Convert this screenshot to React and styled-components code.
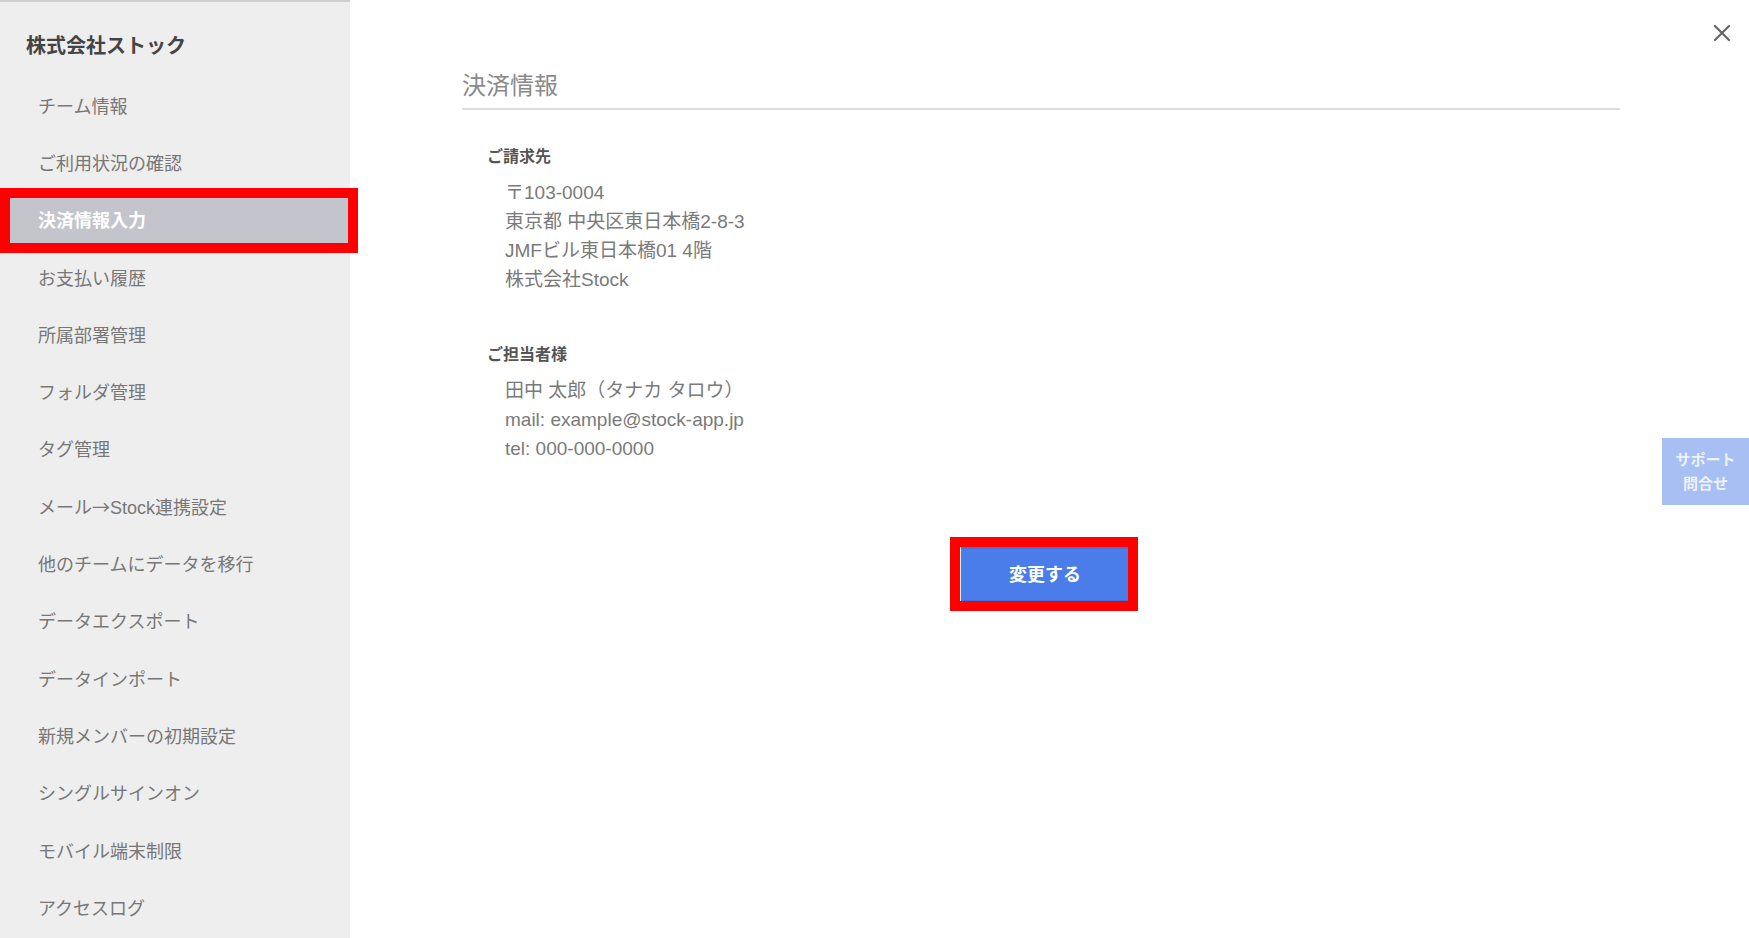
import React from "react";
import styled, { createGlobalStyle } from "styled-components";

const Global = createGlobalStyle`
  html, body { margin: 0; padding: 0; background: #fff; }
  body { font-family: "Liberation Sans", "Noto Sans CJK JP", sans-serif; }
  * { box-sizing: border-box; }
`;

const Page = styled.div`
  display: flex;
  width: 100%;
  height: 938px;
  overflow: hidden;
`;

const Sidebar = styled.aside`
  width: 350px;
  flex: none;
  background: #eeeeee;
  border-top: 2px solid #cfcfcf;
  position: relative;
  z-index: 2;
`;

const TeamName = styled.div`
  margin: 29px 0 15px 26px;
  line-height: 30px;
  font-size: 20px;
  font-weight: 700;
  color: #444;
`;

const Menu = styled.ul`
  list-style: none;
  margin: 0;
  padding: 0;
`;

const MenuItem = styled.li`
  position: relative;
  height: 57.3px;
  display: flex;
  align-items: center;
  padding-left: 38px;
  font-size: 18px;
  color: ${(p) => (p.$active ? "#fff" : "#777")};
  font-weight: ${(p) => (p.$active ? 700 : 400)};
  background: ${(p) => (p.$active ? "#c3c4cc" : "transparent")};
`;

const Arrow = styled.span`
  font-family: "Noto Sans CJK JP", sans-serif;
`;

const MarkBox = styled.span`
  position: absolute;
  pointer-events: none;
  border: 10px solid #ff0000;
  top: ${(p) => p.$t}px;
  left: ${(p) => p.$l}px;
  right: ${(p) => p.$r}px;
  bottom: ${(p) => p.$b}px;
`;

const Main = styled.main`
  flex: 1;
  position: relative;
`;

const Content = styled.div`
  margin-left: 112px;
  width: 1158px;
`;

const Heading = styled.h1`
  margin: 0;
  padding: 70px 0 6px;
  line-height: 32px;
  font-size: 24px;
  font-weight: 400;
  color: #8a8a8a;
  border-bottom: 2px solid #dcdcdc;
`;

const Section = styled.section`
  padding-left: 25px;
  margin-top: ${(p) => p.$top}px;
`;

const Label = styled.div`
  font-size: 16px;
  line-height: 24px;
  font-weight: 700;
  color: #555;
`;

const Lines = styled.div`
  margin-top: 9px;
  padding-left: 18px;
  font-size: 19px;
  line-height: 29px;
  color: #7a7a7a;
`;

const ButtonRow = styled.div`
  display: flex;
  justify-content: center;
  margin-top: 84px;
  padding-left: 8px;
`;

const Button = styled.button`
  position: relative;
  width: 168px;
  height: 55px;
  border: none;
  border-top: 2px solid #3f72e6;
  border-bottom: 2px solid #3f72e6;
  background: #4a7de9;
  color: #fff;
  font-family: inherit;
  font-size: 18px;
  font-weight: 700;
  padding: 0 0 3px;
  cursor: pointer;
`;

const Close = styled.button`
  position: absolute;
  top: 22px;
  right: 16px;
  width: 22px;
  height: 22px;
  padding: 0;
  border: none;
  background: transparent;
  display: flex;
  align-items: center;
  justify-content: center;
`;

const SupportTab = styled.div`
  position: absolute;
  right: 0;
  top: 438px;
  width: 87px;
  height: 67px;
  background: #a8bff3;
  color: #eef2fd;
  font-size: 15px;
  font-weight: 700;
  line-height: 24px;
  display: flex;
  flex-direction: column;
  align-items: center;
  justify-content: center;
`;

const menu = [
  "チーム情報",
  "ご利用状況の確認",
  "決済情報入力",
  "お支払い履歴",
  "所属部署管理",
  "フォルダ管理",
  "タグ管理",
  "ARROW",
  "他のチームにデータを移行",
  "データエクスポート",
  "データインポート",
  "新規メンバーの初期設定",
  "シングルサインオン",
  "モバイル端末制限",
  "アクセスログ",
];

export default function App() {
  return (
    <>
      <Global />
      <Page>
        <Sidebar>
          <TeamName>株式会社ストック</TeamName>
          <Menu>
            {menu.map((m, i) => (
              <MenuItem key={m} $active={i === 2}>
                {m === "ARROW" ? (
                  <>
                    メール<Arrow>→</Arrow>Stock連携設定
                  </>
                ) : (
                  m
                )}
                {i === 2 && <MarkBox $t={-3} $l={0} $r={-8} $b={-5} />}
              </MenuItem>
            ))}
          </Menu>
        </Sidebar>
        <Main>
          <Content>
            <Heading>決済情報</Heading>
            <Section $top={35}>
              <Label>ご請求先</Label>
              <Lines>
                <div>〒103-0004</div>
                <div>東京都 中央区東日本橋2-8-3</div>
                <div>JMFビル東日本橋01 4階</div>
                <div>株式会社Stock</div>
              </Lines>
            </Section>
            <Section $top={49}>
              <Label>ご担当者様</Label>
              <Lines>
                <div>田中 太郎（タナカ タロウ）</div>
                <div>mail: example@stock-app.jp</div>
                <div>tel: 000-000-0000</div>
              </Lines>
            </Section>
            <ButtonRow>
              <Button>
                変更する
                <MarkBox $t={-12} $l={-11} $r={-9} $b={-11} />
              </Button>
            </ButtonRow>
          </Content>
          <Close aria-label="close">
            <svg width="18" height="18" viewBox="0 0 18 18">
              <path d="M2 2 L16 16 M16 2 L2 16" stroke="#666" strokeWidth="2.2" strokeLinecap="round" />
            </svg>
          </Close>
          <SupportTab>
            <span>サポート</span>
            <span>問合せ</span>
          </SupportTab>
        </Main>
      </Page>
    </>
  );
}
